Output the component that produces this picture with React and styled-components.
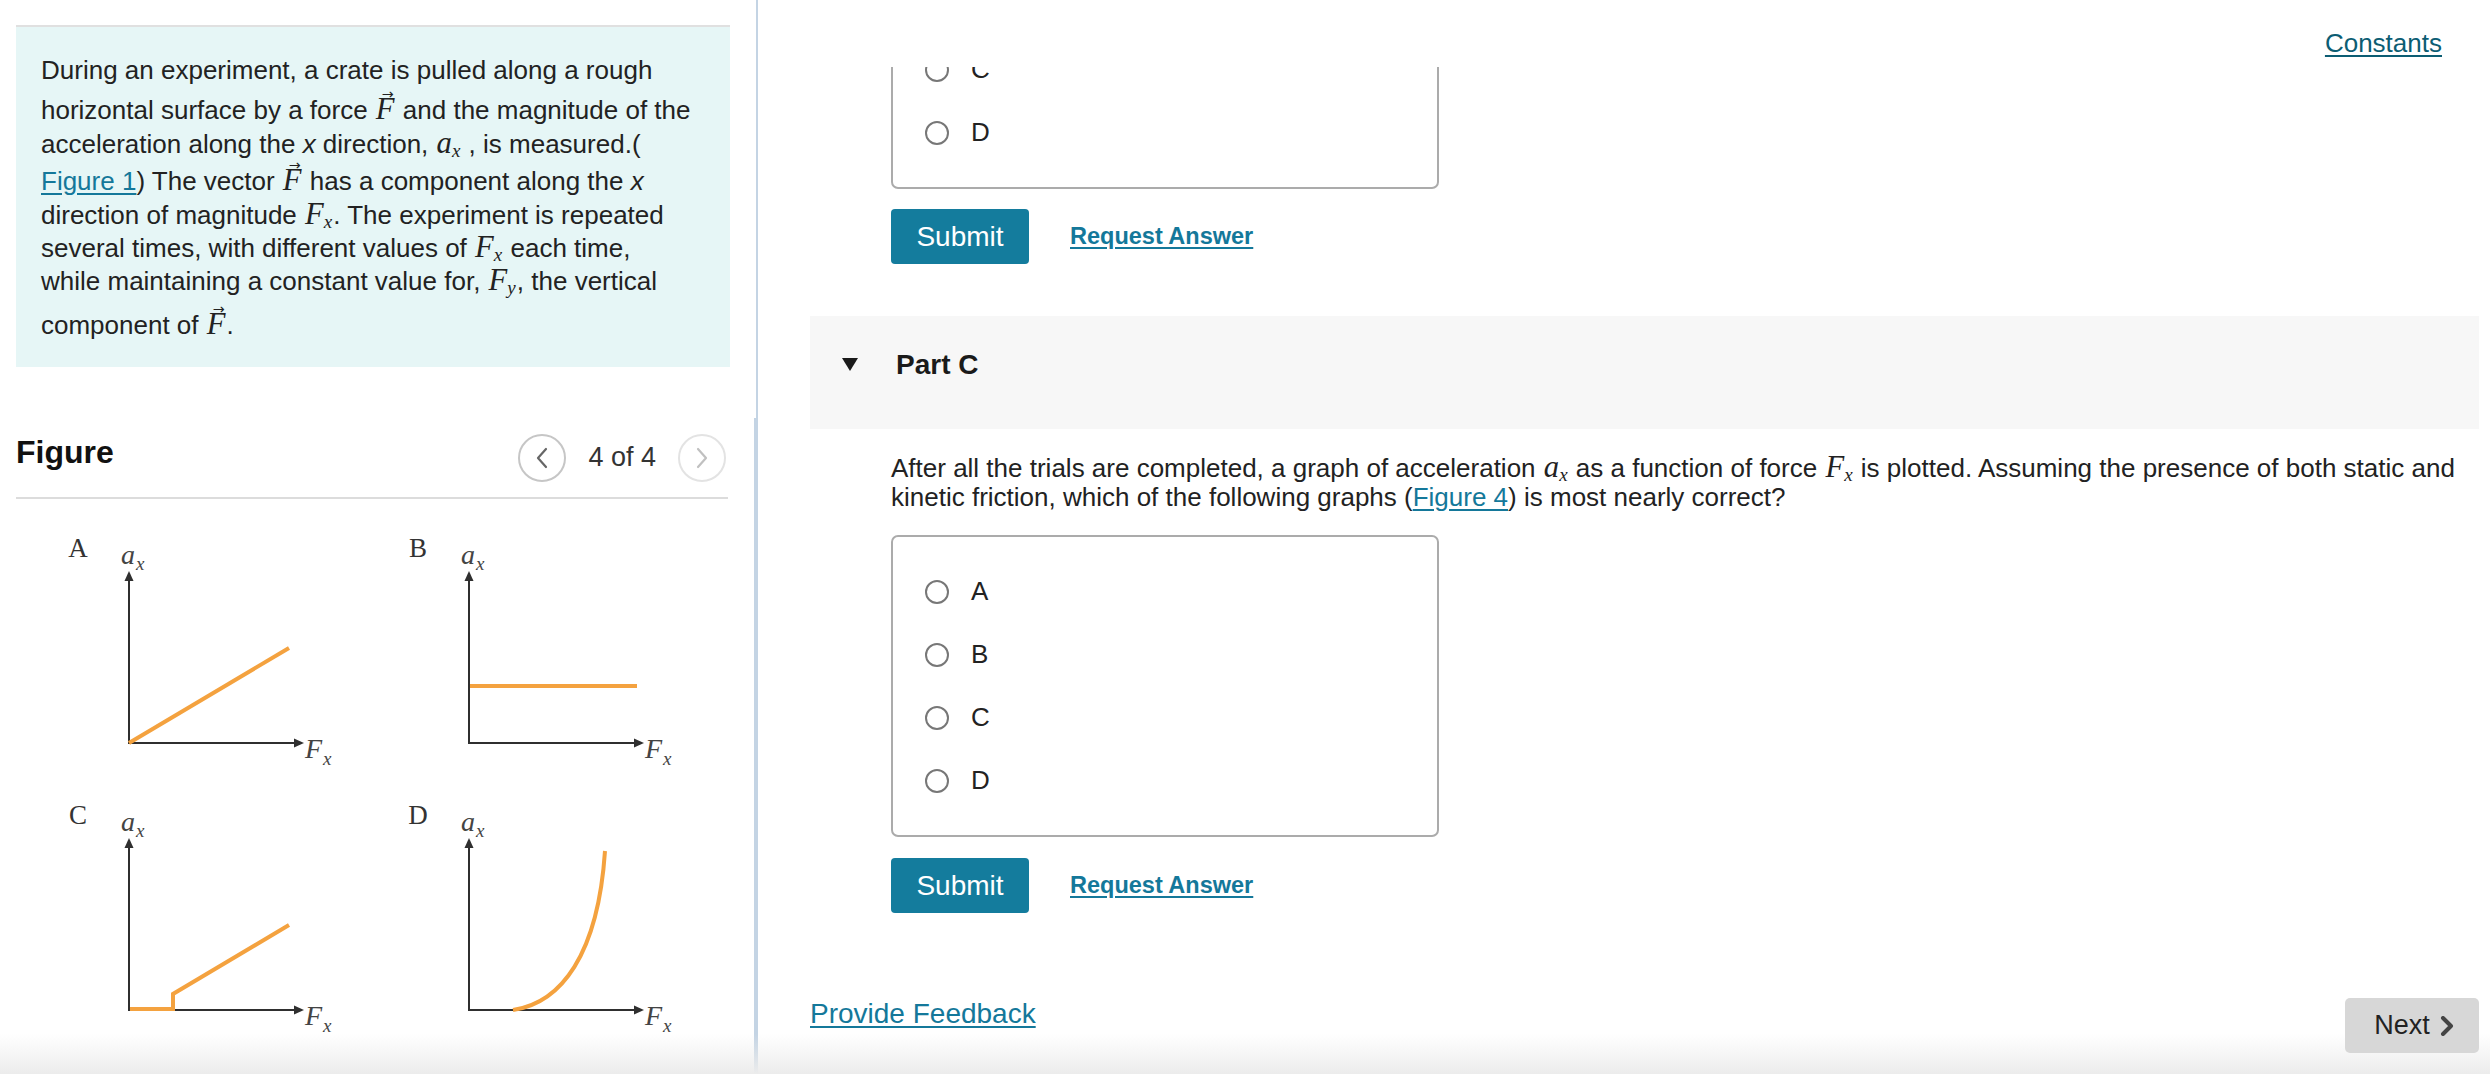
import React from 'react';
import styled, { createGlobalStyle } from 'styled-components';

const GlobalStyle = createGlobalStyle`
  html, body {
    margin: 0;
    padding: 0;
    background: #fff;
  }
  body {
    font-family: "Liberation Sans", Arial, sans-serif;
    color: #222;
  }
`;

const Page = styled.div`
  position: relative;
  display: flex;
  width: 100%;
  height: 100vh;
  overflow: hidden;
`;

const LeftPanel = styled.aside`
  flex: none;
  width: 758px;
  box-sizing: border-box;
  border-right: 2px solid #c4d4e4;
  display: flex;
  flex-direction: column;
`;

const InfoBox = styled.div`
  margin: 25px 0 0 16px;
  width: 714px;
  box-sizing: border-box;
  border-top: 2px solid #e0e0e0;
  background: #e6f6f6;
  padding: 27px 0 25px 25px;
  font-size: 26px;
  color: #222;
`;

const Line = styled.div`
  height: 33px;
  line-height: 33px;
  white-space: nowrap;
  margin-top: ${p => p.$gap || 0}px;
`;

const MathVar = styled.span`
  font-family: "Liberation Serif", "DejaVu Serif", serif;
  font-style: italic;
  font-size: 1.18em;
  padding: 0 1px;
`;

const Sub = styled.sub`
  font-size: 0.62em;
  line-height: 0;
  vertical-align: -0.22em;
`;

const VecWrap = styled.span`
  position: relative;
  display: inline-block;
  line-height: 1;
`;

const VecArrow = styled.span`
  position: absolute;
  left: 62%;
  top: -0.5em;
  transform: translateX(-50%);
  font-family: "DejaVu Sans", sans-serif;
  font-style: normal;
  font-size: 0.55em;
  line-height: 1;
`;

const Em = styled.span`
  font-style: italic;
`;

const TextLink = styled.a`
  color: ${p => p.$dark ? '#0c5d73' : '#14789a'};
  text-decoration: underline;
  text-underline-offset: 3px;
  cursor: pointer;
`;

const FigureSection = styled.section`
  margin-top: 51px;
  flex: 1;
  width: 756px;
  box-sizing: border-box;
  border-right: 2px solid #c4d4e4;
`;

const FigureHeader = styled.div`
  margin-left: 16px;
  width: 712px;
  height: 81px;
  box-sizing: border-box;
  border-bottom: 2px solid #dcdcdc;
  display: flex;
  align-items: center;
  justify-content: space-between;
  padding-right: 2px;
`;

const FigureTitle = styled.h2`
  margin: 0 0 10px 0;
  font-size: 32px;
  font-weight: 700;
  color: #111;
`;

const Pager = styled.div`
  display: flex;
  align-items: center;
  gap: 22px;
  font-size: 27px;
  color: #333;
`;

const PagerButton = styled.button`
  width: 48px;
  height: 48px;
  border-radius: 50%;
  border: 2px solid ${p => p.disabled ? '#e3e3e3' : '#c6c6c6'};
  background: #fff;
  display: flex;
  align-items: center;
  justify-content: center;
  padding: 0;
  color: ${p => p.disabled ? '#c0c0c0' : '#666'};
`;

const FigureCanvas = styled.svg`
  display: block;
  margin: 21px 0 0 16px;
`;

const RightPanel = styled.main`
  flex: 1;
  min-width: 0;
  display: flex;
  flex-direction: column;
`;

const TopBar = styled.div`
  height: 67px;
  flex: none;
  box-sizing: border-box;
  padding: 28px 48px 0 0;
  display: flex;
  justify-content: flex-end;
  font-size: 26px;
  line-height: 30px;
`;

const Scroller = styled.div`
  flex: 1;
  overflow: hidden;
  padding: 0 11px 0 52px;
`;

const AnswerBox = styled.div`
  margin: ${p => p.$top}px 0 0 81px;
  width: 548px;
  box-sizing: border-box;
  border: 2px solid #ababab;
  border-radius: 7px;
  padding: 23px 0;
`;

const Choice = styled.label`
  height: 63px;
  display: flex;
  align-items: center;
  gap: 22px;
  padding-left: 32px;
  font-size: 26px;
  color: #222;
`;

const Radio = styled.span`
  width: 24px;
  height: 24px;
  box-sizing: border-box;
  border-radius: 50%;
  border: 2px solid #777;
  background: #fff;
`;

const ActionRow = styled.div`
  margin: ${p => p.$top}px 0 0 81px;
  display: flex;
  align-items: center;
  gap: 41px;
`;

const SubmitButton = styled.button`
  width: 138px;
  height: 55px;
  border: none;
  border-radius: 4px;
  background: #147c9d;
  color: #fff;
  font-family: "Liberation Sans", Arial, sans-serif;
  font-size: 28px;
  padding: 0;
`;

const BoldLink = styled.a`
  color: #14789a;
  font-size: 23.5px;
  font-weight: 700;
  text-decoration: underline;
  text-underline-offset: 3px;
`;

const PartHeader = styled.div`
  margin-top: 52px;
  height: 113px;
  box-sizing: border-box;
  background: #f7f7f7;
  display: flex;
  align-items: center;
  padding: 0 0 16px 32px;
  gap: 38px;
`;

const PartTitle = styled.h3`
  margin: 0;
  font-size: 28px;
  font-weight: 700;
  color: #1a1a1a;
`;

const Question = styled.div`
  margin: 23px 0 0 81px;
  font-size: 26px;
  color: #222;
`;

const QLine = styled.div`
  height: 30px;
  line-height: 30px;
  white-space: nowrap;
`;

const Footer = styled.div`
  margin-top: 85px;
  display: flex;
  justify-content: space-between;
  align-items: flex-start;
`;

const FeedbackLink = styled.a`
  margin-top: 1px;
  font-size: 28px;
  line-height: 30px;
  color: #14789a;
  text-decoration: underline;
  text-underline-offset: 3px;
`;

const NextButton = styled.button`
  position: relative;
  z-index: 2;
  width: 134px;
  height: 55px;
  border: none;
  border-radius: 5px;
  background: #d7d7d7;
  color: #222;
  font-family: "Liberation Sans", Arial, sans-serif;
  font-size: 27px;
  display: flex;
  align-items: center;
  justify-content: center;
  gap: 10px;
  padding: 0 0 0 4px;
`;

const BottomShade = styled.div`
  position: absolute;
  left: 0;
  right: 0;
  bottom: 0;
  height: 40px;
  background: linear-gradient(to bottom, rgba(236, 236, 236, 0), #ececec);
  pointer-events: none;
  z-index: 1;
`;

const Vec = ({ children }) => (
  <VecWrap>
    <MathVar>{children}</MathVar>
    <VecArrow>→</VecArrow>
  </VecWrap>
);

const M = ({ v, s }) => (
  <MathVar>
    {v}
    {s && <Sub>{s}</Sub>}
  </MathVar>
);

const Chevron = ({ dir }) => (
  <svg width="14" height="22" viewBox="0 0 14 22">
    <polyline
      points={dir === 'left' ? '11,2 3,11 11,20' : '3,2 11,11 3,20'}
      fill="none"
      stroke="currentColor"
      strokeWidth="2.2"
      strokeLinecap="round"
      strokeLinejoin="round"
    />
  </svg>
);

const ORANGE = '#f4a23f';
const AXIS = '#2f2f2f';

// one small graph: axes, labels and the orange curve, local coords
const Graph = ({ x, y, label, curve }) => (
  <g transform={`translate(${x} ${y})`}>
    <text x="62" y="37" fontFamily="Liberation Serif, serif" fontSize="27" fill="#333" textAnchor="middle">{label}</text>
    <text x="105" y="44" fontFamily="Liberation Serif, serif" fontStyle="italic" fontSize="28" fill="#444">a</text>
    <text x="120" y="50" fontFamily="Liberation Serif, serif" fontStyle="italic" fontSize="19" fill="#444">x</text>
    <line x1="113" y1="58" x2="113" y2="223" stroke={AXIS} strokeWidth="2" />
    <polygon points="113,51 108.5,61 117.5,61" fill={AXIS} />
    <line x1="112" y1="223" x2="280" y2="223" stroke={AXIS} strokeWidth="2" />
    <polygon points="288,223 278,218.5 278,227.5" fill={AXIS} />
    <text x="289" y="238" fontFamily="Liberation Serif, serif" fontStyle="italic" fontSize="28" fill="#444">F</text>
    <text x="307" y="245" fontFamily="Liberation Serif, serif" fontStyle="italic" fontSize="19" fill="#444">x</text>
    <path d={curve} fill="none" stroke={ORANGE} strokeWidth="4" strokeLinejoin="miter" />
  </g>
);

const graphs = [
  { x: 0, y: 0, label: 'A', curve: 'M113,223 L273,128' },
  { x: 340, y: 0, label: 'B', curve: 'M114,166 L281,166' },
  { x: 0, y: 267, label: 'C', curve: 'M114,222 H157 V207 L273,138' },
  { x: 340, y: 267, label: 'D', curve: 'M157,223 C205,216 242,168 249,64' },
];

const choices = ['A', 'B', 'C', 'D'];

export default function App() {
  return (
    <>
      <GlobalStyle />
      <Page>
        <LeftPanel>
          <InfoBox>
            <Line>During an experiment, a crate is pulled along a rough</Line>
            <Line $gap={7}>horizontal surface by a force <Vec>F</Vec> and the magnitude of the</Line>
            <Line>acceleration along the <Em>x</Em> direction, <M v="a" s="x" /> , is measured.(</Line>
            <Line $gap={5}><TextLink>Figure 1</TextLink>) The vector <Vec>F</Vec> has a component along the <Em>x</Em></Line>
            <Line>direction of magnitude <M v="F" s="x" />. The experiment is repeated</Line>
            <Line>several times, with different values of <M v="F" s="x" /> each time,</Line>
            <Line>while maintaining a constant value for, <M v="F" s="y" />, the vertical</Line>
            <Line $gap={12}>component of <Vec>F</Vec>.</Line>
          </InfoBox>

          <FigureSection>
            <FigureHeader>
              <FigureTitle>Figure</FigureTitle>
              <Pager>
                <PagerButton aria-label="Previous figure"><Chevron dir="left" /></PagerButton>
                <span>4 of 4</span>
                <PagerButton disabled aria-label="Next figure"><Chevron dir="right" /></PagerButton>
              </Pager>
            </FigureHeader>
            <FigureCanvas width="714" height="530" viewBox="0 0 714 530">
              {graphs.map(g => <Graph key={g.label} {...g} />)}
            </FigureCanvas>
          </FigureSection>
        </LeftPanel>

        <RightPanel>
          <TopBar>
            <TextLink $dark>Constants</TextLink>
          </TopBar>
          <Scroller>
            <AnswerBox $top={-180}>
              {choices.map(c => (
                <Choice key={c}><Radio />{c}</Choice>
              ))}
            </AnswerBox>
            <ActionRow $top={20}>
              <SubmitButton>Submit</SubmitButton>
              <BoldLink>Request Answer</BoldLink>
            </ActionRow>

            <PartHeader>
              <svg width="16" height="13" viewBox="0 0 16 13">
                <polygon points="0,0 16,0 8,13" fill="#1a1a1a" />
              </svg>
              <PartTitle>Part C</PartTitle>
            </PartHeader>

            <Question>
              <QLine>
                After all the trials are completed, a graph of acceleration <M v="a" s="x" /> as a function of force <M v="F" s="x" /> is plotted. Assuming the presence of both static and
              </QLine>
              <QLine>
                kinetic friction, which of the following graphs (<TextLink>Figure 4</TextLink>) is most nearly correct?
              </QLine>
            </Question>

            <AnswerBox $top={23}>
              {choices.map(c => (
                <Choice key={c}><Radio />{c}</Choice>
              ))}
            </AnswerBox>
            <ActionRow $top={21}>
              <SubmitButton>Submit</SubmitButton>
              <BoldLink>Request Answer</BoldLink>
            </ActionRow>

            <Footer>
              <FeedbackLink>Provide Feedback</FeedbackLink>
              <NextButton>
                Next
                <svg width="14" height="20" viewBox="0 0 14 20">
                  <polyline points="3,2 11,10 3,18" fill="none" stroke="#444" strokeWidth="4" strokeLinejoin="round" strokeLinecap="round" />
                </svg>
              </NextButton>
            </Footer>
          </Scroller>
        </RightPanel>
        <BottomShade />
      </Page>
    </>
  );
}
